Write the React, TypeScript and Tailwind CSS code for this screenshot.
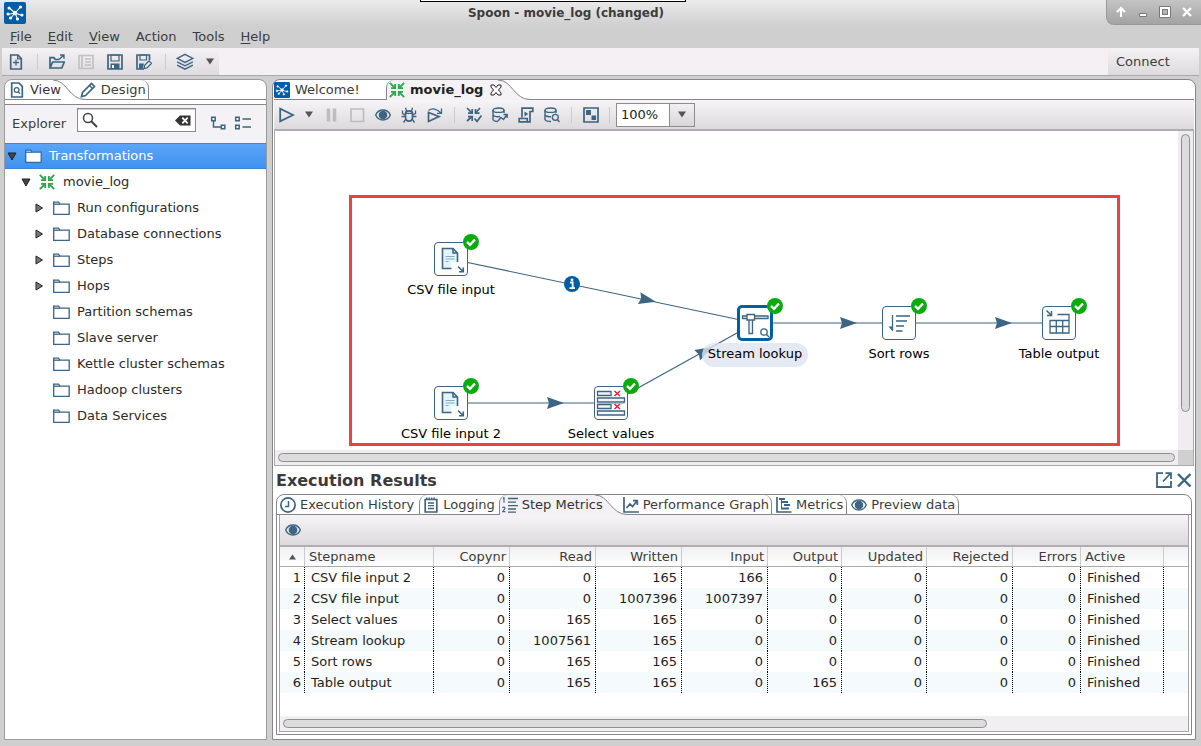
import React from "react";

const INK = "#3d6480";

type IconProps = { children: React.ReactNode; size?: string; box?: string };

function Icon({ children, size = "w-4 h-4", box = "0 0 16 16" }: IconProps) {
  return (
    <svg
      className={`${size} flex-shrink-0`}
      viewBox={box}
      fill="none"
      stroke={INK}
      strokeWidth={1.7}
      aria-hidden="true"
    >
      {children}
    </svg>
  );
}

/* ---------- icons ---------- */

function Logo({ size = "w-4 h-4" }: { size?: string }) {
  return (
    <svg className={`${size} flex-shrink-0`} viewBox="0 0 22 22" aria-hidden="true">
      <rect width="22" height="22" rx="2" fill="#005da6" />
      <g stroke="#fff" strokeWidth="1.1" fill="#fff">
        <path d="M11 11L5 5.5M11 11L16.5 5M11 11L4 12.5M11 11L18 13.5M11 11L13.5 17M11 11L6.5 16.5" />
        <circle cx="11" cy="11" r="1.7" />
        <circle cx="5" cy="6" r="1" />
        <circle cx="16.5" cy="5" r="1" />
        <circle cx="4" cy="12" r="1" />
        <circle cx="18" cy="13" r="1" />
        <circle cx="13.5" cy="17" r="1" />
        <circle cx="6.5" cy="16" r="1" />
      </g>
    </svg>
  );
}

function TransIcon() {
  return (
    <svg className="w-4 h-4 flex-shrink-0" viewBox="0 0 16 16" fill="none" stroke="#2aa84f" strokeWidth="1.8" aria-hidden="true">
      <path d="M.8 .8L6 6M15.2 .8L10 6M.8 15.2L6 10M15.2 15.2L10 10" />
      <path d="M2 6.2H6.2V2M14 6.2H9.8V2M2 9.8H6.2V14M14 9.8H9.8V14" />
    </svg>
  );
}

const NewIcon = () => (
  <Icon>
    <path d="M2.7 1H10L13.3 4.5V15H2.7Z" />
    <path d="M9.7 1V4.8H13.5M8 5.5V11.5M5 8.5H11" strokeWidth="1.3" />
  </Icon>
);
const OpenIcon = () => (
  <Icon>
    <path d="M1 14V3.7H5L6.3 5.5H10M1 14L3.7 8H15.3L12.8 14Z" />
    <path d="M10 5.5L14.5 1.2M11 1H15V5" strokeWidth="1.3" />
  </Icon>
);
const ListIcon = () => (
  <Icon>
    <g stroke="#c4c1c4">
      <path d="M1 1.5H15V14.5H1ZM4 1.5V14.5M7 5H13M7 8H13M7 11H13" />
    </g>
  </Icon>
);
const SaveIcon = () => (
  <Icon>
    <path d="M1 1H15V15H1Z" />
    <path d="M4 1H12V7H4Z" strokeWidth="1.2" />
    <path d="M3.5 9.5H12.5V15H3.5Z" fill={INK} stroke="none" />
    <path d="M5 11H7V14H5Z" fill="#fff" stroke="none" />
  </Icon>
);
const SaveAsIcon = () => (
  <Icon>
    <path d="M8 15H1V1H13.5V6" />
    <path d="M4 1H10.5V6H4Z" strokeWidth="1.2" />
    <path d="M3 9.5H8L6.5 15H3Z" fill={INK} stroke="none" />
    <path d="M8 14.5L8.5 11.5L13 7L15.5 9.3L11 14Z" strokeWidth="1.3" fill="#f4f4f4" />
  </Icon>
);
const LayersIcon = () => (
  <Icon size="w-[18px] h-[18px]">
    <path d="M8 1.2L15 4.8L8 8.4L1 4.8Z" strokeWidth="1.2" />
    <path d="M1 7.8L8 11.4L15 7.8M1 10.8L8 14.4L15 10.8" strokeWidth="1.2" />
  </Icon>
);
const Caret = () => (
  <svg className="w-2 h-[7px] flex-shrink-0" viewBox="0 0 8 7" aria-hidden="true">
    <path d="M0 .5H8L4 6.5Z" fill="#555" />
  </svg>
);
const EyeIcon = () => (
  <Icon>
    <path d="M.7 8C3.5 1.4 12.5 1.4 15.3 8C12.5 14.6 3.5 14.6 .7 8Z" strokeWidth="1.4" />
    <circle cx="8" cy="8" r="4.3" fill={INK} stroke="none" />
  </Icon>
);
const PlayIcon = () => (
  <Icon>
    <path d="M1.2 1.8V14.2L14 8Z" strokeWidth="1.8" />
  </Icon>
);
const PauseIcon = () => (
  <Icon>
    <path d="M5.5 1.5V14.5M11.5 1.5V14.5" stroke="#bfbcc0" strokeWidth="3.5" />
  </Icon>
);
const StopIcon = () => (
  <Icon>
    <path d="M2 2H14.5V14.5H2Z" stroke="#bfbcc0" />
  </Icon>
);
const BugIcon = () => (
  <Icon>
    <path d="M4.5 6.5C4.5 3 11.5 3 11.5 6.5V10C11.5 15.5 4.5 15.5 4.5 10Z" />
    <path d="M4.5 6.3H11.5M5.5 4L4.5 .8M10.5 4L11.5 .8M4.5 8L1.5 6.5V3.5M11.5 8L14.5 6.5V3.5M4.5 9.5H.5M11.5 9.5H15.5M5 12L2.5 15.5M11 12L13.5 15.5" strokeWidth="1.3" />
  </Icon>
);
const ReplayIcon = () => (
  <Icon>
    <path d="M1.5 5.5V14.5L12 9.5Z" />
    <path d="M1.5 3.5C5 .8 10 1.5 14 6M14.5 1.5V6.3H10" strokeWidth="1.3" />
  </Icon>
);
const VerifyIcon = () => (
  <Icon>
    <path d="M1 1L6 6M14 1L9.5 6M1 14L6 9.5" />
    <path d="M2 6.2H6.2V2M13.5 6.2H9.5V2M2 9.6H6.2V14" />
    <path d="M8.5 11.5L11 14.3L15.5 8.5" />
  </Icon>
);
const DbArrowIcon = () => (
  <Icon>
    <ellipse cx="6.5" cy="3.2" rx="5.5" ry="2.2" strokeWidth="1.4" />
    <path d="M1 3V12.5C1.5 14 4 14.5 6 14.5M12 3V6M1 8C2 9.8 6 10 8 9.5" strokeWidth="1.4" />
    <path d="M6 14L9 10.5L11.5 12.5L15 7.5M11.5 7.5H15.2V11" strokeWidth="1.4" />
  </Icon>
);
const ScriptIcon = () => (
  <Icon>
    <path d="M4 10.5V1.2H14.8V4.5H12V14.8H1.2V11.5H9.2V14.5" />
    <path d="M6.5 4.5V9.5L10.3 7Z" fill={INK} stroke="none" />
  </Icon>
);
const DbSearchIcon = () => (
  <Icon>
    <ellipse cx="6.5" cy="3.2" rx="5.5" ry="2.2" strokeWidth="1.4" />
    <path d="M1 3V12.5C1.5 14 4 14.5 7 14.5M12 3V6M1 8C2 9.5 5 9.8 7 9.8" strokeWidth="1.4" />
    <circle cx="11.3" cy="10.3" r="3" strokeWidth="1.3" />
    <path d="M13.3 12.5L15.5 15" strokeWidth="1.4" />
  </Icon>
);
const ResultsIcon = () => (
  <Icon>
    <path d="M1 1H15V15H1Z" />
    <path d="M3 3H8V8H3ZM8.5 8.5H13V13H8.5Z" fill={INK} stroke="none" />
  </Icon>
);
const ViewTabIcon = () => (
  <Icon>
    <path d="M2.7 1H10L13.3 4.3V15H2.7Z" />
    <circle cx="7.6" cy="8" r="2.4" strokeWidth="1.2" />
    <path d="M9.3 9.8L11 11.8" strokeWidth="1.3" />
  </Icon>
);
const PencilIcon = () => (
  <Icon>
    <path d="M1.5 14.5L2.5 10.5L11.5 1.5L14.5 4.5L5.5 13.5Z" />
    <path d="M9.5 3.5L12.5 6.5" strokeWidth="1.2" />
  </Icon>
);
const Folder = ({ filled }: { filled?: boolean }) => (
  <svg className="w-[17px] h-4 flex-shrink-0" viewBox="0 0 17 16" fill={filled ? "#fff" : "none"} stroke={filled ? "#2d6cab" : INK} strokeWidth="1.3" aria-hidden="true">
    <path d="M.7 2.2H5.5L7 4.2H16.2V14.3H.7Z" />
    <path d="M.7 4.2H7" />
  </svg>
);
const ClockIcon = () => (
  <Icon>
    <circle cx="8" cy="8" r="7.1" />
    <path d="M8.5 4V9.5H5" strokeWidth="1.5" />
  </Icon>
);
const NotepadIcon = () => (
  <Icon>
    <path d="M2.2 2.5H13.8V15H2.2Z" />
    <path d="M3 1.5H13" strokeDasharray="1.5 1" strokeWidth="2" />
    <path d="M5 6H11M5 8.7H11M5 11.5H11" strokeWidth="1.3" />
  </Icon>
);
const StepsIcon = () => (
  <Icon>
    <path d="M6 1.5H16M6 5.2H14M6 12H14M6 15.2H14M6 8.7H16" strokeWidth="1.3" />
    <path d="M.8 1.5L2 .8V5.8M.5 11C1 9.7 3.2 9.8 2.9 11.5L.7 14.6H3.4" strokeWidth="1.1" />
  </Icon>
);
const GraphIcon = () => (
  <Icon>
    <path d="M1 0V15H16" />
    <path d="M3.5 11L7 7L9.5 9.5L14 4M10 3.7H14.3V8" />
  </Icon>
);
const MetricsIcon = () => (
  <Icon>
    <path d="M1 0V15H15.5" />
    <path d="M3 2H9M5 5H12M8 8H14M5 11.5H13" strokeWidth="2" />
    <path d="M5.5 1V11" strokeWidth="1" />
  </Icon>
);

/* ---------- shared pieces ---------- */

function ToolButton({ label, children }: { label: string; children: React.ReactNode }) {
  return (
    <button type="button" aria-label={label} className="flex h-5 items-center justify-center">
      {children}
    </button>
  );
}

const Separator = ({ className = "" }: { className?: string }) => (
  <span className={`h-4 w-px flex-shrink-0 bg-[#cdcbcd] ${className}`} />
);

function TabCurve({ fill }: { fill: string }) {
  return (
    <svg className="relative z-10 -mb-px -ml-2 h-5 w-8 flex-shrink-0" viewBox="0 0 32 20" aria-hidden="true">
      {/* the fill starts where the tab's own background ends */}
      <path d="M8 0V1.5C15 6 18 19.5 32 19.5V20H8Z" fill={fill} />
      <path d="M8 0H32V19.5C18 19.5 15 6 8 1.5Z" fill="#fff" />
      <path d="M0 0C14 0 16 19.5 32 19.5" fill="none" stroke="#85858a" />
    </svg>
  );
}

/* ---------- explorer ---------- */

const tree = [
  { name: "Run configurations", open: true },
  { name: "Database connections", open: true },
  { name: "Steps", open: true },
  { name: "Hops", open: true },
  { name: "Partition schemas", open: false },
  { name: "Slave server", open: false },
  { name: "Kettle cluster schemas", open: false },
  { name: "Hadoop clusters", open: false },
  { name: "Data Services", open: false },
];

const ArrowDown = () => (
  <svg className="mr-2 h-[9px] w-[10px] flex-shrink-0" viewBox="0 0 10 9" aria-hidden="true">
    <path d="M1 1H9L5 8Z" fill="#444" stroke="#222" />
  </svg>
);

function Explorer() {
  return (
    <aside className="flex w-[263px] flex-shrink-0 flex-col rounded-t-lg border border-[#9a9a9a] bg-white">
      <div className="flex h-5 border-b border-[#85858a] pl-1">
        <button type="button" className="flex items-center gap-[5px] text-[#333]">
          <ViewTabIcon />
          View
        </button>
        <TabCurve fill="#fff" />
        <button type="button" className="relative z-20 -ml-[5px] flex items-center gap-[5px] rounded-tr-lg border-r border-[#85858a] pr-[2px]">
          <PencilIcon />
          Design
        </button>
      </div>
      <div className="h-[5px] border-b border-[#85858a]" />
      <div className="flex h-[38px] items-start bg-[#f4f2f5] pl-[7px] pt-[3px]">
        <label htmlFor="search" className="w-[65px] pt-2">
          Explorer
        </label>
        <div className="flex h-6 w-[119px] items-center border border-[#8d8b8d] bg-white px-1 shadow-[inset_0_1px_1px_#ccc]">
          <svg className="h-4 w-4 flex-shrink-0" viewBox="0 0 16 16" fill="none" stroke="#444" aria-hidden="true">
            <circle cx="6" cy="6" r="4.5" strokeWidth="1.5" />
            <path d="M9.3 9.3L15 15" strokeWidth="2" />
          </svg>
          <input id="search" type="text" className="w-0 flex-1 bg-transparent outline-none" />
          <button type="button" aria-label="Clear search">
            <svg className="h-[11px] w-4" viewBox="0 0 16 11" aria-hidden="true">
              <path d="M0 5.5L5 .5H15.5V10.5H5Z" fill="#333" />
              <path d="M7.3 2.7L12.7 8.3M12.7 2.7L7.3 8.3" stroke="#fff" strokeWidth="1.8" />
            </svg>
          </button>
        </div>
        <div className="ml-[14px] flex items-center gap-2 pt-[5px]">
          <ToolButton label="Expand all">
            <Icon>
              <path d="M1.7 2.2H5.2V5.7H1.7ZM11.3 10.2H14.8V13.7H11.3ZM3.5 6V12H11" strokeWidth="1.5" />
            </Icon>
          </ToolButton>
          <ToolButton label="Collapse all">
            <Icon size="w-[18px] h-4" box="0 0 18 16">
              <path d="M1.7 2.2H5.2V5.7H1.7ZM1.7 10.2H5.2V13.7H1.7ZM8.5 4H17M8.5 12H17" strokeWidth="1.5" />
            </Icon>
          </ToolButton>
        </div>
      </div>
      <ul className="flex-1 text-[#2b2b2b]">
        <li className="flex h-[26px] items-center border-y border-[#3b86d6] bg-linear-to-b from-[#5ba4f8] to-[#3d93ee] pl-[2px] text-white">
          <ArrowDown />
          <Folder filled />
          <span className="ml-[7px]">Transformations</span>
        </li>
        <li className="flex h-[26px] items-center pl-4">
          <ArrowDown />
          <TransIcon />
          <span className="ml-2">movie_log</span>
        </li>
        {tree.map((item) => (
          <li key={item.name} className="flex h-[26px] items-center pl-[30px]">
            <span className="w-[18px]">
              {item.open && (
                <svg className="h-[10px] w-[9px]" viewBox="0 0 9 10" aria-hidden="true">
                  <path d="M1 1V9L7.5 5Z" fill="#777" stroke="#222" />
                </svg>
              )}
            </span>
            <Folder />
            <span className="ml-[7px]">{item.name}</span>
          </li>
        ))}
      </ul>
    </aside>
  );
}

/* ---------- canvas ---------- */

const FileGlyph = () => (
  <g>
    <path d="M8 6.5H19L23 10.5V20.5H17V27H8Z" fill="#e2f5fb" stroke="none" />
    <path d="M17.5 26.5H8.5V6.5H19L23.5 11V20" />
    <path d="M19 6.5V11H23.5" />
    <path d="M11.5 14.5H20.5M11.5 17H20.5M11.5 19.5H14.5" strokeWidth="1" stroke="#8aa9bd" />
    <path d="M24 24.5L29 29.5M29.3 25.5V29.8H25" />
  </g>
);

const LookupGlyph = () => (
  <g strokeWidth="1.3">
    <path d="M4.5 10H30V12.5H4.5Z" fill="#eef8fb" />
    <path d="M11 12V27.5H14.5V12" fill="#eef8fb" />
    <path d="M9 8.5H16.5V14H9Z" fill="#fff" />
    <circle cx="26" cy="26" r="3.2" />
    <path d="M28.3 28.3L31 31" />
  </g>
);

const SelectGlyph = () => (
  <g strokeWidth="1.3">
    <path d="M3.5 5.5H17V9.5H3.5ZM3.5 12H30.5V16H3.5ZM3.5 18.5H17V22.5H3.5ZM3.5 25H30.5V29H3.5Z" fill="#eef8fb" />
    <path d="M3.5 17.2H30.5" stroke="#8aa9bd" strokeWidth="1" />
    <path d="M20.5 5L26 10M26 5L20.5 10M20.5 18L26 23M26 18L20.5 23" stroke="#e0243c" strokeWidth="1.6" />
  </g>
);

const SortGlyph = () => (
  <g>
    <path d="M10.5 9V24" strokeWidth="1.3" />
    <path d="M6.5 20.5L10.8 25.5V20.5Z" fill={INK} stroke="none" />
    <path d="M14 10H28M14 15H25M14 20H22M14 25H20.5" strokeWidth="1.5" />
  </g>
);

const TableGlyph = () => (
  <g strokeWidth="1.3">
    <path d="M15.5 8.5H27V14.5H8V27H27V14.5" />
    <path d="M8 20.5H27M14.3 14.5V27M20.7 14.5V27" />
    <path d="M4.5 4.5L9 9M9.5 5V9.5H5" strokeWidth="1.5" />
  </g>
);

const steps = [
  { name: "CSV file input", x: 176, y: 128, glyph: <FileGlyph /> },
  { name: "CSV file input 2", x: 176, y: 272, glyph: <FileGlyph /> },
  { name: "Select values", x: 336, y: 272, glyph: <SelectGlyph /> },
  { name: "Stream lookup", x: 480, y: 192, glyph: <LookupGlyph />, selected: true },
  { name: "Sort rows", x: 624, y: 192, glyph: <SortGlyph /> },
  { name: "Table output", x: 784, y: 192, glyph: <TableGlyph /> },
];

// arrow head position and direction for every hop
const hops = [
  { from: [176, 128], to: [480, 192], at: [373, 169], turn: 12 },
  { from: [176, 272], to: [336, 272], at: [281, 272], turn: 0 },
  { from: [336, 272], to: [480, 192], at: [430, 220], turn: -29 },
  { from: [480, 192], to: [624, 192], at: [574, 192], turn: 0 },
  { from: [624, 192], to: [784, 192], at: [729, 192], turn: 0 },
];

function Canvas() {
  return (
    <div className="relative min-h-[319px] flex-1 overflow-hidden bg-white">
      <div className="absolute left-[74px] top-16 h-[251px] w-[771px] border-[3px] border-[#ed4141]" />
      <svg className="absolute left-0 top-0 h-[319px] w-[903px]" viewBox="0 0 903 319" aria-hidden="true">
        {hops.map((hop, i) => (
          <g key={i}>
            <path
              d={`M${hop.from[0]} ${hop.from[1]}L${hop.to[0]} ${hop.to[1]}`}
              stroke={INK}
              strokeWidth="1.2"
            />
            <path
              d="M-9 -6L8 0L-9 6L-7 0Z"
              fill={INK}
              transform={`translate(${hop.at[0]} ${hop.at[1]}) rotate(${hop.turn})`}
            />
          </g>
        ))}
        <circle cx="297" cy="153" r="8" fill="#005da0" />
        <path d="M295 151.5H297.7V157M294.5 157.2H300" stroke="#fff" strokeWidth="1.8" fill="none" />
        <circle cx="297" cy="148.8" r="1.4" fill="#fff" />
      </svg>
      {steps.map((step) => (
        <div
          key={step.name}
          className="absolute flex w-32 flex-col items-center text-black"
          style={{ left: step.x - 64, top: step.y - 18 }}
        >
          <div className="relative flex h-9 w-9 items-center justify-center">
            <div
              className={
                step.selected
                  ? "flex h-9 w-9 items-center justify-center rounded-[5px] border-[3px] border-[#00609f] bg-white"
                  : "flex h-[34px] w-[34px] items-center justify-center rounded-[4px] border border-[#3d6480] bg-white"
              }
            >
              <svg className="h-[34px] w-[34px] flex-shrink-0" viewBox="0 0 34 34" fill="none" stroke={INK} strokeWidth="1.6" aria-hidden="true">
                {step.glyph}
              </svg>
            </div>
            <svg className="absolute -right-[10px] -top-[7px] h-4 w-4" viewBox="0 0 16 16" aria-hidden="true">
              <circle cx="8" cy="8" r="8" fill="#0bab10" />
              <path d="M4 8L7 10.8L12 5.5" fill="none" stroke="#fff" strokeWidth="2.4" />
            </svg>
          </div>
          <span
            className={
              step.selected
                ? "mt-[2px] h-6 whitespace-nowrap rounded-full bg-[#dde4f0]/80 px-[6px] leading-[22px]"
                : "mt-[2px] h-6 whitespace-nowrap leading-[22px]"
            }
          >
            {step.name}
          </span>
        </div>
      ))}
    </div>
  );
}

/* ---------- execution results ---------- */

const columns = [
  { name: "Copynr", width: "w-[76px]" },
  { name: "Read", width: "w-[86px]" },
  { name: "Written", width: "w-[86px]" },
  { name: "Input", width: "w-[86px]" },
  { name: "Output", width: "w-[74px]" },
  { name: "Updated", width: "w-[85px]" },
  { name: "Rejected", width: "w-[86px]" },
  { name: "Errors", width: "w-[68px]" },
];

const rows = [
  { name: "CSV file input 2", values: [0, 0, 165, 166, 0, 0, 0, 0] },
  { name: "CSV file input", values: [0, 0, 1007396, 1007397, 0, 0, 0, 0] },
  { name: "Select values", values: [0, 165, 165, 0, 0, 0, 0, 0] },
  { name: "Stream lookup", values: [0, 1007561, 165, 0, 0, 0, 0, 0] },
  { name: "Sort rows", values: [0, 165, 165, 0, 0, 0, 0, 0] },
  { name: "Table output", values: [0, 165, 165, 0, 165, 0, 0, 0] },
];

const th = "border-b border-r border-b-[#aaa] border-r-[#ccc] p-0 font-normal";
const td = "border-r border-dotted border-black p-0";

function MetricsTable() {
  return (
    <table className="w-full table-fixed border-separate border-spacing-0">
      <thead>
        <tr className="h-5 bg-linear-to-b from-[#f1f0f2] to-white">
          <th className={`${th} w-[25px]`} aria-label="Row number">
            <svg className="mx-auto h-[6px] w-[7px]" viewBox="0 0 7 6" aria-hidden="true">
              <path d="M0 5.5H7L3.5 .5Z" fill="#555" />
            </svg>
          </th>
          <th className={`${th} w-[129px] pl-1 text-left`}>Stepname</th>
          {columns.map((col) => (
            <th key={col.name} className={`${th} ${col.width} pr-[3px] text-right`}>
              {col.name}
            </th>
          ))}
          <th className={`${th} w-[83px] pl-1 text-left`}>Active</th>
          <th className="border-b border-[#aaa] p-0" aria-label="Spare" />
        </tr>
      </thead>
      <tbody className="text-[#1e1e1e]">
        {rows.map((row, i) => (
          <tr key={row.name} className="h-[21px] even:bg-[#f5fafc]">
            <td className={`${td} pr-[3px] text-right`}>{i + 1}</td>
            <td className={`${td} pl-[6px]`}>{row.name}</td>
            {row.values.map((value, j) => (
              <td key={j} className={`${td} pr-1 text-right`}>
                {value}
              </td>
            ))}
            <td className={`${td} pl-[6px]`}>Finished</td>
            <td className="p-0" />
          </tr>
        ))}
      </tbody>
    </table>
  );
}

const tabLeft = "flex items-center gap-1 rounded-tl-lg border-l border-[#85858a]";
const tabRight = "flex items-center gap-1 rounded-tr-lg border-r border-[#85858a]";

function ExecutionResults() {
  return (
    <section className="px-[2px] pb-1">
      <div className="flex h-7 items-center justify-between">
        <h2 className="pt-[2px] text-base font-bold text-[#3a3a3a]">Execution Results</h2>
        <div className="flex items-center gap-1">
          <ToolButton label="Maximize">
            <Icon>
              <path d="M7 1.2H1V15H15V9" strokeWidth="1.8" />
              <path d="M7 9.5L14 2M9.5 1.2H15V7" strokeWidth="1.8" />
            </Icon>
          </ToolButton>
          <ToolButton label="Close">
            <Icon>
              <path d="M2 2L14.5 14.5M14.5 2L2 14.5" strokeWidth="2.4" />
            </Icon>
          </ToolButton>
        </div>
      </div>
      <div className="rounded-t-lg border border-[#85858a] pb-[2px]">
        <div className="flex h-5 border-b border-[#85858a] pl-[3px]">
          <button type="button" className="flex items-center gap-1">
            <ClockIcon />
            Execution History
          </button>
          <button type="button" className={`${tabLeft} ml-[5px] pl-[3px]`}>
            <NotepadIcon />
            Logging
          </button>
          <button type="button" className={`${tabLeft} relative -mb-px ml-1 bg-[#f3f1f4] pl-[2px] text-[#333]`}>
            <StepsIcon />
            Step Metrics
          </button>
          <TabCurve fill="#f3f1f4" />
          <button type="button" className={`${tabRight} relative z-20 -ml-1 pr-[2px]`}>
            <GraphIcon />
            Performance Graph
          </button>
          <button type="button" className={`${tabRight} pl-1 pr-[3px]`}>
            <MetricsIcon />
            Metrics
          </button>
          <button type="button" className={`${tabRight} pl-1 pr-[3px]`}>
            <EyeIcon />
            Preview data
          </button>
        </div>
        <div className="mx-[2px] border border-t-0 border-[#a5a3a5]">
          <div className="flex h-8 items-center border-b-2 border-[#b0aeb0] bg-linear-to-b from-[#f6f4f7] to-[#dcdadc] pl-[5px]">
            <ToolButton label="Preview">
              <EyeIcon />
            </ToolButton>
          </div>
          <div className="min-h-[169px]">
            <MetricsTable />
          </div>
          <div className="h-[15px] bg-[#f1eff2] px-[3px] py-[3px]">
            <div className="h-[9px] w-[78%] rounded-full border border-[#8e8e8e] bg-[#dcdcdc]" />
          </div>
        </div>
      </div>
    </section>
  );
}

/* ---------- window ---------- */

function Editor() {
  return (
    <main className="flex min-w-0 flex-1 flex-col rounded-t-lg border border-[#85858a] bg-white px-px">
      <div className="flex h-5 border-b border-[#85858a]">
        <button type="button" className="flex w-[112px] items-center gap-[5px]">
          <Logo />
          Welcome!
        </button>
        <button
          type="button"
          className="relative -mb-px flex items-center gap-[5px] rounded-tl-lg border-l border-[#85858a] bg-[#f5f2f5] pl-[2px] pr-1 font-bold text-[#222]"
        >
          <TransIcon />
          movie_log
          <svg className="ml-[2px] h-3 w-3" viewBox="0 0 12 12" fill="#fff" stroke="#222" aria-hidden="true">
            <path d="M1 1H4L6 3.5L8 1H11V3L8.5 6L11 9V11H8L6 8.5L4 11H1V9L3.5 6L1 3Z" />
          </svg>
        </button>
        <TabCurve fill="#f5f2f5" />
      </div>
      <div className="flex h-[31px] items-center gap-[10px] border-b-2 border-[#b0aeb0] bg-linear-to-b from-[#f6f4f7] to-[#dcdadc] pl-[5px]">
        <ToolButton label="Run">
          <PlayIcon />
        </ToolButton>
        <ToolButton label="Run options">
          <Caret />
        </ToolButton>
        <ToolButton label="Pause">
          <PauseIcon />
        </ToolButton>
        <ToolButton label="Stop">
          <StopIcon />
        </ToolButton>
        <ToolButton label="Preview">
          <EyeIcon />
        </ToolButton>
        <ToolButton label="Debug">
          <BugIcon />
        </ToolButton>
        <ToolButton label="Replay">
          <ReplayIcon />
        </ToolButton>
        <Separator className="mx-px" />
        <ToolButton label="Verify">
          <VerifyIcon />
        </ToolButton>
        <ToolButton label="Impact">
          <DbArrowIcon />
        </ToolButton>
        <ToolButton label="Get SQL">
          <ScriptIcon />
        </ToolButton>
        <ToolButton label="Explore database">
          <DbSearchIcon />
        </ToolButton>
        <Separator className="mx-px" />
        <ToolButton label="Show results">
          <ResultsIcon />
        </ToolButton>
        <Separator />
        <div className="relative -ml-1 flex h-6 w-[79px] border border-[#8d8b8d] bg-white">
          <select aria-label="Zoom" defaultValue="100%" className="w-full appearance-none bg-transparent pl-1 text-[#222] outline-none">
            <option>100%</option>
            <option>200%</option>
          </select>
          <span className="pointer-events-none absolute inset-y-0 right-0 flex w-[25px] items-center justify-center border-l border-[#8d8b8d] bg-linear-to-b from-[#f2f0f2] to-[#d8d6d8]">
            <Caret />
          </span>
        </div>
      </div>
      <div className="flex flex-1 flex-col border-x border-b border-[#aaa]">
        <div className="flex flex-1">
          <Canvas />
          <div className="w-[15px] flex-shrink-0 bg-[#efedf0] px-[3px] pt-[3px]">
            <div className="h-[88%] w-[9px] rounded-full border border-[#8e8e8e] bg-[#dcdcdc]" />
          </div>
        </div>
        <div className="flex h-[15px] flex-shrink-0">
          <div className="flex-1 bg-[#efedf0] p-[3px]">
            <div className="h-[9px] rounded-full border border-[#8e8e8e] bg-[#dcdcdc]" />
          </div>
          <div className="w-[15px] bg-[#d0d0d0]" />
        </div>
      </div>
      <ExecutionResults />
    </main>
  );
}

const menus = [
  { name: "File", key: true },
  { name: "Edit", key: true },
  { name: "View", key: true },
  { name: "Action", key: false },
  { name: "Tools", key: false },
  { name: "Help", key: true },
];

export default function App() {
  return (
    <div className="relative flex min-h-screen flex-col border-b border-[#666] bg-[#cfcfcf] font-['DejaVu_Sans',sans-serif] text-[13px] leading-4 text-[#3c3c3c]">
      <div className="absolute left-[35%] top-0 h-[2px] w-[266px] border-x border-b border-black bg-white" />

      {/* Title bar */}
      <header className="flex h-[26px] items-start bg-linear-to-b from-[#ebebeb] to-[#cfcfcf] pl-1">
        <div className="pt-[2px]">
          <Logo size="w-[22px] h-[22px]" />
        </div>
        <h1 className="flex-1 pt-[5px] text-center text-xs font-bold">Spoon - movie_log (changed)</h1>
        <div className="flex h-[25px] w-[95px] items-center justify-between rounded-bl-lg border-b border-l border-[#999] bg-linear-to-b from-[#c4c4c4] to-[#a3a3a3] px-2">
          <button type="button" aria-label="Shade">
            <svg className="h-3 w-3" viewBox="0 0 12 12" fill="none" stroke="#fff" strokeWidth="2">
              <path d="M6 11V2M2 6L6 2L10 6" />
            </svg>
          </button>
          <button type="button" aria-label="Minimize">
            <svg className="h-3 w-3" viewBox="0 0 12 12" fill="#fff" stroke="#777">
              <path d="M2.5 7.5H9.5V10.5H2.5Z" />
            </svg>
          </button>
          <button type="button" aria-label="Maximize window">
            <svg className="h-3 w-3" viewBox="0 0 12 12" fill="none" stroke="#fff" strokeWidth="2">
              <path d="M2 2H10V10H2Z" />
              <path d="M.5 .5H11.5V11.5H.5ZM3.5 3.5H8.5V8.5H3.5Z" stroke="#777" strokeWidth="1" />
            </svg>
          </button>
          <button type="button" aria-label="Close window">
            <svg className="h-3 w-3" viewBox="0 0 12 12" fill="none" stroke="#fff" strokeWidth="2.4">
              <path d="M2 2L10 10M10 2L2 10" />
            </svg>
          </button>
        </div>
      </header>

      {/* Menu */}
      <nav className="flex h-[22px] items-center gap-4 pl-[10px]">
        {menus.map((menu) => (
          <button key={menu.name} type="button">
            {menu.key ? (
              <>
                <span className="underline underline-offset-2">{menu.name[0]}</span>
                {menu.name.slice(1)}
              </>
            ) : (
              menu.name
            )}
          </button>
        ))}
      </nav>

      {/* Main toolbar */}
      <div className="mx-[2px] mb-[3px] flex h-7 border-b border-[#aaa] bg-[#f4f0f4]">
        <div className="flex w-[217px] items-center bg-linear-to-b from-[#f4f2f4] to-[#dddbdd] pl-[6px]">
          <ToolButton label="New">
            <NewIcon />
          </ToolButton>
          <Separator className="ml-[13px] mr-[11px]" />
          <div className="flex items-center gap-[13px]">
            <ToolButton label="Open">
              <OpenIcon />
            </ToolButton>
            <ToolButton label="Explore">
              <ListIcon />
            </ToolButton>
            <ToolButton label="Save">
              <SaveIcon />
            </ToolButton>
            <ToolButton label="Save as">
              <SaveAsIcon />
            </ToolButton>
            <Separator />
            <div className="-ml-[3px] flex items-center gap-3">
              <ToolButton label="Perspective">
                <LayersIcon />
              </ToolButton>
              <ToolButton label="Perspective options">
                <Caret />
              </ToolButton>
            </div>
          </div>
        </div>
        <div className="flex-1" />
        <button type="button" className="w-[91px] bg-linear-to-b from-[#f4f2f4] to-[#dddbdd] pl-2 text-left">
          Connect
        </button>
      </div>

      {/* Panels */}
      <div className="flex flex-1 gap-[5px] pb-[6px] pl-1 pr-[5px]">
        <Explorer />
        <Editor />
      </div>
    </div>
  );
}
